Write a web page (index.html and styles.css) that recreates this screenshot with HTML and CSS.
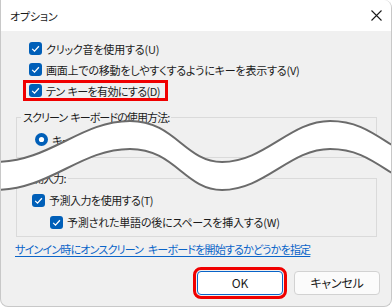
FILE: index.html
```html
<!DOCTYPE html>
<html>
  <head>
    <meta charset='utf-8'>
    <title>オプション</title>
    <link rel="stylesheet" href="styles.css">
  </head>
  <body>
    <div class='window'>
      <div class='titlebar'>
        <span class='title'>オプション</span>
        <svg class='close' width='11' height='11' viewBox='0 0 11 11'>
          <path d='M0.5 0.5 L10.5 10.5 M10.5 0.5 L0.5 10.5' stroke='#1a1a1a' stroke-width='1.1' fill='none'/>
        </svg>
      </div>
      <div class='content'>
        <div class='option top'>
          <svg class='check' viewBox='0 0 13 13'><rect width='13' height='13' rx='3' fill='#005fb8'/><path d='M3.2 6.9 L5.5 9.1 L9.9 4.3' stroke='#fff' stroke-width='1.3' fill='none'/></svg>
          <span>クリック音を使用する(U)</span>
        </div>
        <div class='option top'>
          <svg class='check' viewBox='0 0 13 13'><rect width='13' height='13' rx='3' fill='#005fb8'/><path d='M3.2 6.9 L5.5 9.1 L9.9 4.3' stroke='#fff' stroke-width='1.3' fill='none'/></svg>
          <span>画面上での移動をしやすくするようにキーを表示する(V)</span>
        </div>
        <div class='option marked'>
          <svg class='check' viewBox='0 0 13 13'><rect width='13' height='13' rx='3' fill='#005fb8'/><path d='M3.2 6.9 L5.5 9.1 L9.9 4.3' stroke='#fff' stroke-width='1.3' fill='none'/></svg>
          <span>テン<span class='gap'></span>キーを有効にする(D)</span>
        </div>

        <fieldset class='group first'>
          <legend>スクリーン<span class='gap'></span>キーボードの使用方法:</legend>
          <div class='option radio_row'>
            <svg class='check' viewBox='0 0 13 13'><circle cx='6.5' cy='6.5' r='6.5' fill='#005fb8'/><circle cx='6.5' cy='6.5' r='2.6' fill='#fff'/></svg>
            <span>キーをクリックする(C)</span>
          </div>
        </fieldset>

        <fieldset class='group second'>
          <legend>予測入力:</legend>
          <div class='option level1'>
            <svg class='check' viewBox='0 0 13 13'><rect width='13' height='13' rx='3' fill='#005fb8'/><path d='M3.2 6.9 L5.5 9.1 L9.9 4.3' stroke='#fff' stroke-width='1.3' fill='none'/></svg>
            <span>予測入力を使用する(T)</span>
          </div>
          <div class='option level2'>
            <svg class='check' viewBox='0 0 13 13'><rect width='13' height='13' rx='3' fill='#005fb8'/><path d='M3.2 6.9 L5.5 9.1 L9.9 4.3' stroke='#fff' stroke-width='1.3' fill='none'/></svg>
            <span>予測された単語の後にスペースを挿入する(W)</span>
          </div>
        </fieldset>

        <a class='link' href='#'>サインイン時にオンスクリーン キーボードを開始するかどうかを指定</a>

        <div class='buttons'>
          <div class='button default'>OK</div>
          <div class='button'>キャンセル</div>
        </div>
      </div>

      <!-- break mark drawn over the dialog -->
      <svg class='wave' width='392' height='307' viewBox='0 0 392 307'>
        <path d='M-5 162 C50 162 80 121 130 121 C175 121 185 162 222 162 C265 162 290 121 330 121 C360 121 375 135 400 150 L400 178 C375 163 360 149 330 149 C290 149 265 190 222 190 C185 190 175 149 130 149 C80 149 50 190 -5 190 Z' fill='#fff'/>
        <path d='M-5 162 C50 162 80 121 130 121 C175 121 185 162 222 162 C265 162 290 121 330 121 C360 121 375 135 400 150' stroke='#6b6b6b' stroke-width='2' fill='none'/>
        <path d='M-5 190 C50 190 80 149 130 149 C175 149 185 190 222 190 C265 190 290 149 330 149 C360 149 375 163 400 178' stroke='#6b6b6b' stroke-width='2' fill='none'/>
      </svg>
    </div>
  </body>
</html>
```

FILE: styles.css
```css
body {
  margin: 0;
  background: #fff;
  font-family: "Noto Sans CJK JP", "Noto Sans", sans-serif;
  font-size: 11px;
  letter-spacing: -0.2px;
  color: #1b1b1b;
  font-feature-settings: "palt";
}

.window {
  position: relative;
  width: 392px;
  height: 307px;
  box-sizing: border-box;
  background: #f0f0f0;
  border: 1px solid #c8c8c8;
  border-top: none;
  border-radius: 0 8px 8px 8px;
  overflow: hidden;
}

.titlebar {
  height: 31px;
  background: #fff;
  display: flex;
  align-items: center;
  justify-content: space-between;
  padding: 0 9px 0 9px;
  box-sizing: border-box;
}

.title {
  line-height: 16px;
}

.close {
  margin-top: -1px;
}

.content {
  padding-top: 7px;
}

.gap {
  display: inline-block;
  width: 3px;
}

.option {
  display: flex;
  align-items: center;
  gap: 4px;
  height: 21px;
  line-height: 16px;
  white-space: nowrap;
}

.check {
  width: 13px;
  height: 13px;
  flex: none;
}

.option.top {
  padding-left: 28px;
}

.option.marked {
  width: fit-content;
  box-sizing: border-box;
  margin-left: 22px;
  padding: 0 5px 0 3px;
  border: 3px solid #f00000;
  letter-spacing: -0.6px;
}

.group {
  margin: 8px 14px 0 15px;
  padding: 0;
  border: 1px solid #dadada;
  min-width: 0;
}

.group legend {
  margin-left: 4px;
  padding: 0 2px;
  line-height: 16px;
  letter-spacing: -0.9px;
}

.group.first {
  padding: 4px 0 7px 0;
}

.group.second {
  margin-top: 12px;
  padding: 3px 0 3px 0;
}

.radio_row {
  padding-left: 18px;
}

.group.second .option {
  height: 22px;
}

.level1 {
  padding-left: 15px;
  letter-spacing: -0.5px;
}

.level2 {
  padding-left: 33px;
}

.link {
  display: block;
  margin: 4px 0 0 14px;
  line-height: 16px;
  color: #0a64c8;
  letter-spacing: -0.8px;
  word-spacing: 3px;
  text-decoration: underline;
  text-underline-offset: 2px;
  white-space: nowrap;
}

.buttons {
  display: flex;
  justify-content: flex-end;
  gap: 11px;
  margin-top: 14px;
  padding-right: 11px;
}

.button {
  width: 86px;
  height: 24px;
  box-sizing: border-box;
  background: #fbfbfb;
  border: 1px solid #d2d2d2;
  border-radius: 4px;
  text-align: center;
  line-height: 22px;
  font-size: 12px;
}

.button.default {
  background: #fff;
  border-color: #0a64c8;
  outline: 3px solid #f00000;
  outline-offset: 1px;
}

.wave {
  position: absolute;
  top: 0;
  left: -1px;
  pointer-events: none;
}
```
